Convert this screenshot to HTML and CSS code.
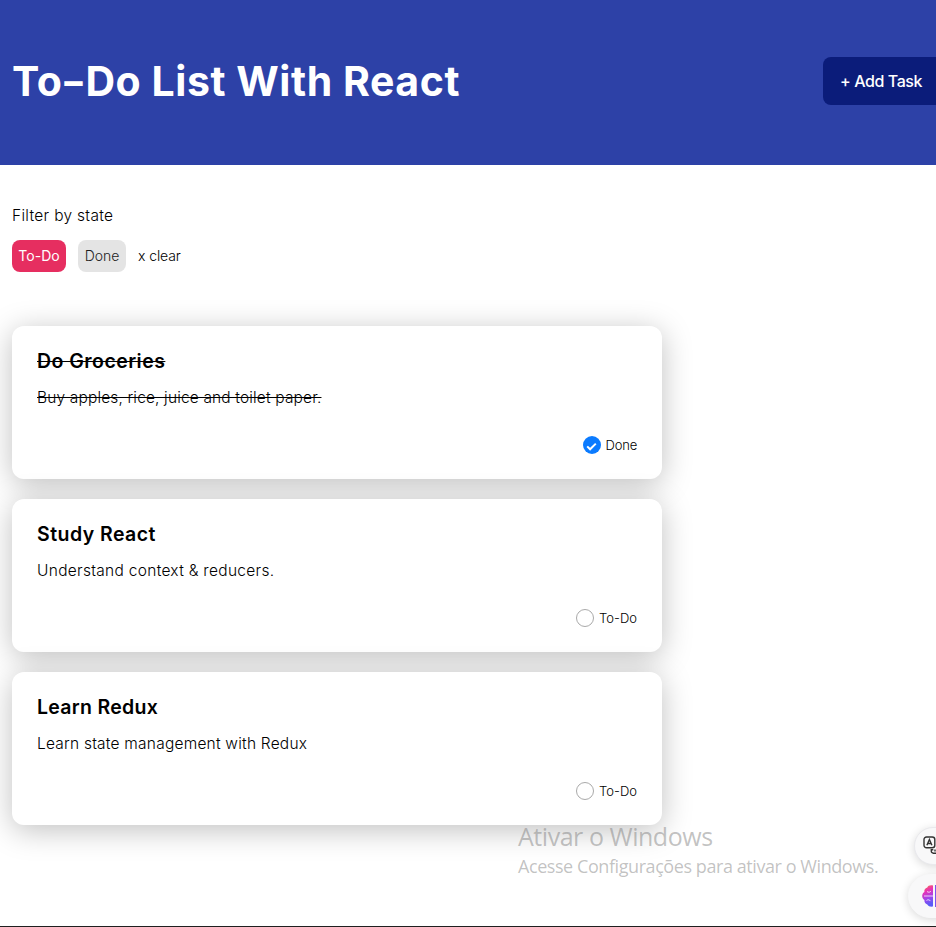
FILE: index.html
```html
<!DOCTYPE html>
<html lang="en">
<head>
<meta charset="utf-8">
<title>To-Do List With React</title>
<link rel="stylesheet" href="styles.css">
</head>
<body>
<header class="header">
  <h1 class="title"><span>To<span class="dash">-</span>Do List With React</span></h1>
  <button class="add"><span>+ Add Task</span></button>
</header>
<main class="main">
  <p class="filter-label"><span>Filter by state</span></p>
  <div class="filters">
    <button class="chip chip-todo"><span>To-Do</span></button>
    <button class="chip chip-done"><span>Done</span></button>
    <button class="clear"><span>x clear</span></button>
  </div>
  <section class="list">
    <article class="card completed">
      <h2 class="name n1"><span>Do Groceries</span></h2>
      <p class="desc d1"><span>Buy apples, rice, juice and toilet paper.</span></p>
      <label class="state">
        <svg width="18" height="18" viewBox="0 0 18 18"><circle cx="9" cy="9" r="9" fill="#0b7bff"/><path d="M4.200 10.400 7.100 13.300 12.800 7.600" fill="none" stroke="#fff" stroke-width="2"/></svg>
        <span class="s-done">Done</span>
      </label>
    </article>
    <article class="card">
      <h2 class="name n2"><span>Study React</span></h2>
      <p class="desc d2"><span>Understand context &amp; reducers.</span></p>
      <label class="state">
        <svg width="18" height="18" viewBox="0 0 18 18"><circle cx="9" cy="9" r="8.5" fill="#fff" stroke="#a9a9a9"/></svg>
        <span class="s-todo">To-Do</span>
      </label>
    </article>
    <article class="card">
      <h2 class="name n3"><span>Learn Redux</span></h2>
      <p class="desc d3"><span>Learn state management with Redux</span></p>
      <label class="state">
        <svg width="18" height="18" viewBox="0 0 18 18"><circle cx="9" cy="9" r="8.5" fill="#fff" stroke="#a9a9a9"/></svg>
        <span class="s-todo">To-Do</span>
      </label>
    </article>
  </section>
</main>
<aside class="watermark">
  <p class="wm-title"><span>Ativar o Windows</span></p>
  <p class="wm-text"><span>Acesse Configurações para ativar o Windows.</span></p>
</aside>
<div class="float translate">
  <svg width="22" height="20" viewBox="0 0 22 20" fill="none" stroke="#333" stroke-width="1.4"><rect x="1" y="1" width="10.800" height="10.800" rx="2.500"/><path d="M3.900 9.300 6.400 3.500 8.900 9.300M4.700 7.500H8.100"/><path d="M10.300 13.800H8.300v1.400a2 2 0 0 0 2 2H15M12 13.600v2"/></svg>
</div>
<div class="float brain">
  <svg width="26" height="22" viewBox="0 0 26 22">
    <defs><linearGradient id="g" x1="0" y1="0" x2=".25" y2="1"><stop offset="0" stop-color="#ff7a35"/><stop offset=".35" stop-color="#e832b4"/><stop offset=".7" stop-color="#a044ec"/><stop offset="1" stop-color="#5b5cf6"/></linearGradient></defs>
    <path d="M11 .5C8 0 6 .8 5.300 2.500 3 3 2 5 2.400 7 .8 8 .2 9.500.2 11s.8 3.200 2.200 4c-.2 2 .9 3.800 2.900 4.400C6.500 21.300 8.500 22 11 21.500Z" fill="url(#g)"/>
    <path d="M13 0h12v22H13Z" fill="#8052f0"/>
    <path d="M2 11h9M5 6.500c1.500 1.200 3 .8 4-.4M4.500 15.500c1.500-1.200 3-.8 4 .6" fill="none" stroke="#fff" stroke-opacity=".75"/>
  </svg>
</div>
<div class="edge"></div>
</body>
</html>
```
FILE: styles.css
```css
* { box-sizing: border-box; }
body {
  margin: 0;
  height: 927px;
  position: relative;
  overflow: hidden;
  background: #fff;
  color: #000;
  font-family: Inter, "Liberation Sans", sans-serif;
}
h1, h2, p { margin: 0; }
span { white-space: nowrap; }
button { border: 0; font: inherit; }
.header {
  height: 165px;
  padding: 0 0 3px 12px;
  background: #2d41a7;
  display: flex;
  align-items: center;
  justify-content: space-between;
}
.title { color: #fff; font-size: 41px; line-height: 54px; font-weight: 700; letter-spacing: .55px; }
.dash {
  display: inline-block;
  width: 23px;
  text-align: center;
  letter-spacing: 0;
  transform: scaleX(1.35);
}
.add {
  flex: none;
  width: 134px;
  height: 48px;
  margin-right: -21px;
  padding: 0 0 1px 17px;
  border-radius: 8px;
  background: #0b1c7a;
  color: #fff;
  font-size: 16px;
  font-weight: 500;
  letter-spacing: -.4px;
  text-align: left;
}
.main { padding: 39px 12px 0; }
.filter-label { font-size: 15.500px; line-height: 24px; font-weight: 300; letter-spacing: .3px; }
.filters { display: flex; gap: 12px; margin-top: 12px; }
.chip, .clear {
  height: 32px;
  padding: 0 0 1px;
  border-radius: 8px;
  font-size: 14px;
  text-align: center;
}
.chip-todo { width: 54px; background: #e62e60; color: #fff; }
.chip-done { width: 48px; background: #e4e4e4; color: #1d1d1d; font-weight: 300; }
.clear { background: none; font-weight: 300; color: #000; letter-spacing: -.1px; }
.list { display: flex; flex-direction: column; gap: 20px; margin-top: 54px; width: 650px; }
.card {
  height: 153px;
  padding: 22px 25px 24px;
  border-radius: 12px;
  background: #fff;
  box-shadow: 0 5px 30px rgba(0, 0, 0, .25);
  display: flex;
  flex-direction: column;
}
.name { font-size: 19.500px; line-height: 26px; font-weight: 600; letter-spacing: .46px; }
.n3 { letter-spacing: .28px; }
.desc { margin-top: 12px; font-size: 15.500px; line-height: 24px; font-weight: 300; }
.d1 { letter-spacing: .15px; }
.d2 { letter-spacing: .3px; }
.d3 { letter-spacing: .22px; }
.completed .name, .completed .desc { text-decoration: line-through; }
.state {
  margin-top: auto;
  display: flex;
  justify-content: flex-end;
  align-items: center;
  gap: 5px;
  font-size: 13px;
  line-height: 20px;
  font-weight: 300;
}
.s-done { letter-spacing: -.2px; }
.watermark {
  position: absolute;
  left: 518px;
  top: 819px;
  font-family: "Open Sans", sans-serif;
  font-weight: 400;
  color: rgba(120, 120, 120, .45);
}
.wm-title { font-size: 25px; line-height: 34px; letter-spacing: -.46px; }
.wm-text { font-size: 18px; line-height: 26px; letter-spacing: -.43px; }
.float {
  position: absolute;
  background: #f8f8f9;
  border: 1px solid #e9e9ed;
  box-shadow: 0 2px 10px rgba(0, 0, 0, .15);
  display: flex;
  align-items: center;
  overflow: hidden;
}
.translate { left: 914px; top: 827px; width: 60px; height: 38px; border-radius: 19px; padding-left: 8px; }
.brain { left: 908px; top: 874px; width: 60px; height: 44px; border-radius: 22px; padding-left: 13px; border-color: #f8f8f9; }
.edge { position: absolute; left: 0; right: 0; bottom: 0; height: 1px; background: #1f1f1f; }
```
